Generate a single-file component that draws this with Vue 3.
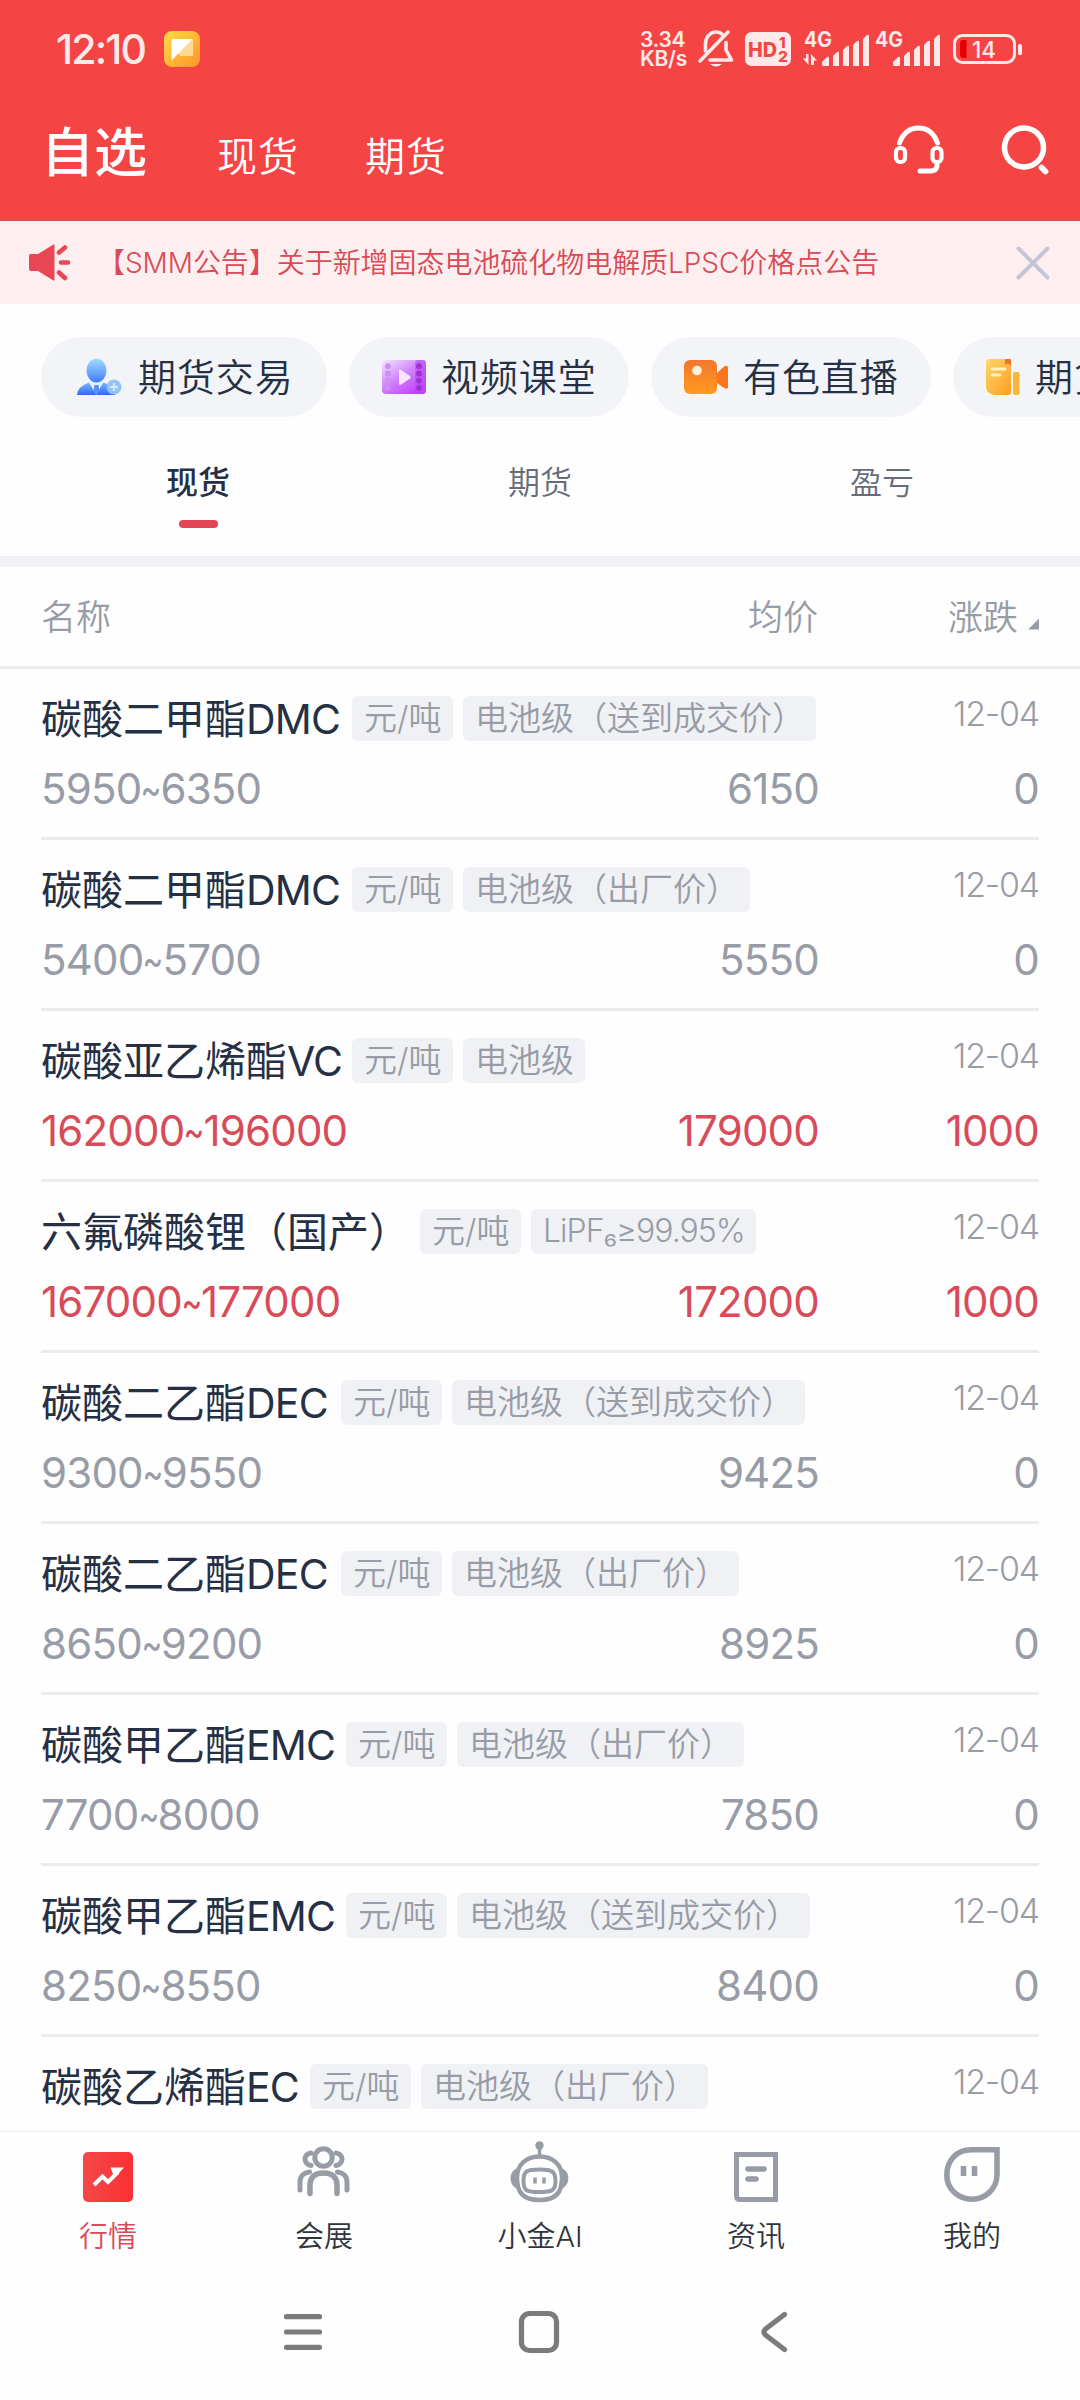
<template>
  <div class="screen">
    <header class="top">
      <div class="status">
        <span class="clock">12:10</span>
        <svg class="note-app" width="36" height="36" viewBox="0 0 36 36">
          <defs>
            <linearGradient id="note-bg" x1="0" y1="0" x2="1" y2="1">
              <stop offset="0" stop-color="#ffdc45" />
              <stop offset="1" stop-color="#ff9428" />
            </linearGradient>
          </defs>
          <rect width="36" height="36" rx="8" fill="url(#note-bg)" />
          <path d="M7 8h22v17H16z" fill="#ffd995" />
          <path d="M8.500 8H28.500L7.500 29.500V9z" fill="#fff" />
        </svg>

        <div class="status-icons">
          <div class="speed"><span>3.34</span><span>KB/s</span></div>
          <svg class="bell" width="36" height="38" viewBox="0 0 36 38" fill="none" stroke="#ffe8e8" stroke-width="3.600" stroke-linecap="round">
            <path d="M2 31 30 2" />
            <path d="M7.500 21v-7c0-7 4.500-12 10.500-12 3 0 5 1 7 2.800" />
            <path d="M28 12.500V20l5.500 10H12" stroke-linejoin="round" />
            <path d="M12 34h12q-6 5-12 0z" fill="#ffe8e8" stroke="none" />
          </svg>
          <svg class="hd" width="46" height="34" viewBox="0 0 46 34">
            <rect width="46" height="34" rx="6.500" fill="#ffe8e8" />
            <text x="3" y="24.500" font-size="20" textLength="29" lengthAdjust="spacingAndGlyphs">HD</text>
            <text x="34" y="16" font-size="15">1</text>
            <text x="33" y="30" font-size="15" textLength="10" lengthAdjust="spacingAndGlyphs">2</text>
          </svg>
          <svg v-for="sim in 2" :key="sim" class="signal" width="66" height="36" viewBox="0 0 66 36" fill="#ffe8e8">
            <text x="1" y="16" font-size="21" textLength="28" lengthAdjust="spacingAndGlyphs">4G</text>
            <path v-if="sim === 1" d="M5.500 23v11L0 27.500h3V23zM8 34V23l6 6.500h-3V34z" />
            <path d="M19 34v-3l5-5q2-1 2 1v8h-6zM30 35V25l4-4q2-1 2 1v13zM40 35V19l4-4q2-1 2 1v19zM50 35V14l4-4q2-1 2 1v24zM60 35V8l4-4q2-1 2 1v30z" />
          </svg>
          <svg class="battery" width="70" height="32" viewBox="0 0 70 32">
            <rect x="1.500" y="2.500" width="60" height="27" rx="8" fill="none" stroke="#ffe8e8" stroke-width="3" />
            <path d="M8 7h5.500v18H11q-4 0-4-4V10q0-3 3-3z" fill="#e50000" />
            <rect x="65" y="11" width="4" height="11" rx="1.500" fill="#ffe8e8" />
            <text x="19" y="24.500" font-size="23" textLength="24" lengthAdjust="spacingAndGlyphs" fill="#ffe8e8">14</text>
          </svg>
        </div>
      </div>

      <nav class="channels">
        <span class="channel on">自选</span>
        <span class="channel">现货</span>
        <span class="channel">期货</span>
        <div class="tools">
          <svg width="52" height="52" viewBox="0 0 52 52" fill="none" stroke="#fff" stroke-width="4.200" stroke-linecap="round" stroke-linejoin="round">
            <path d="M6.500 19C10.500 8 17.500 4 25.500 4S40.500 8 44.500 19" stroke-width="5" />
            <rect x="3" y="24" width="9" height="14" rx="4" />
            <rect x="39.500" y="24" width="9" height="14" rx="4" />
            <path d="M44 39v3q-1 5-6 5H27" stroke-width="5" />
          </svg>
          <svg width="50" height="52" viewBox="0 0 50 52" fill="none" stroke="#fff" stroke-linecap="round">
            <circle cx="23" cy="23.500" r="19.500" stroke-width="5.500" />
            <path d="M40.500 43.500 44.500 47.500" stroke-width="5.800" />
          </svg>
        </div>
      </nav>
    </header>

    <div class="notice">
      <svg width="44" height="40" viewBox="0 0 44 40" fill="#e94656">
        <path d="M3 11h7L25.500 1.500q1-.5 1 1v34q0 1.500-1 1L10 28H3q-2 0-2-2V13q0-2 2-2z" />
        <path d="M31 9.500 37 4.500M33 19.500h7M31 29.500l6 5.500" stroke="#e94656" stroke-width="4.600" stroke-linecap="round" />
      </svg>
      <p>【SMM公告】关于新增固态电池硫化物电解质LPSC价格点公告</p>
      <svg width="34" height="34" viewBox="0 0 34 34" fill="none" stroke="#c5c5d6" stroke-width="4" stroke-linecap="round">
        <path d="M2.500 2.500l29 29M31.500 2.500l-29 29" />
      </svg>
    </div>

    <div class="pills">
      <div v-for="pill in pills" :key="pill.icon" class="pill" :class="pill.icon">
        <svg v-if="pill.icon === 'trade'" width="46" height="38" viewBox="0 0 46 38">
          <defs>
            <linearGradient id="face" x1="0" y1="0" x2="0" y2="1">
              <stop offset="0" stop-color="#a5dcff" />
              <stop offset="1" stop-color="#3f7dff" />
            </linearGradient>
            <linearGradient id="coat" x1="0" y1="0" x2="0" y2="1">
              <stop offset="0" stop-color="#7db4ff" />
              <stop offset="1" stop-color="#2f6bf0" />
            </linearGradient>
          </defs>
          <path d="M0 37q0-8 12-12.500L19 36l7.500-11.500Q38 28 38 37z" fill="url(#coat)" />
          <path d="M13 24.500h12.500L19.500 37z" fill="#e3f1ff" />
          <path d="M17.500 27h4l1 6-3 4-3-4z" fill="#5292f8" />
          <ellipse cx="19.500" cy="12.500" rx="10" ry="12" fill="url(#face)" />
          <circle cx="37" cy="29" r="7.500" fill="#93c3f5" />
          <path d="M37 25v8M33 29h8" stroke="#d5eaff" stroke-width="1.800" />
        </svg>
        <svg v-else-if="pill.icon === 'video'" width="44" height="36" viewBox="0 0 44 36">
          <defs>
            <linearGradient id="film" x1="0" y1="0" x2=".8" y2="1">
              <stop offset="0" stop-color="#f6e8ff" />
              <stop offset=".5" stop-color="#d084fa" />
              <stop offset="1" stop-color="#c03cff" />
            </linearGradient>
          </defs>
          <rect y="1" width="44" height="34" rx="4" fill="url(#film)" />
          <rect x="33" y="1" width="11" height="34" rx="3" fill="#b64cf0" opacity=".6" />
          <g v-for="hole in 4" :key="hole">
            <circle cx="6" :cy="hole * 7.200" r="2.900" fill="#cf8df2" />
            <circle cx="37" :cy="hole * 7.200" r="2.900" fill="#9f2fd8" />
          </g>
          <path d="M17 11.500v13q0 2 2 1l9-6q1.500-1.500 0-2.500l-9-6q-2-1-2 .5z" fill="#fbe4ff" />
        </svg>
        <svg v-else-if="pill.icon === 'live'" width="44" height="36" viewBox="0 0 44 36">
          <defs>
            <linearGradient id="cam" x1="0" y1="0" x2="0" y2="1">
              <stop offset="0" stop-color="#f3762f" />
              <stop offset="1" stop-color="#ff9a1c" />
            </linearGradient>
          </defs>
          <path d="M33 14 40 7.500q4-2 4 1V28q0 3-4 1l-7-5z" fill="#f9761f" />
          <rect y="1" width="33" height="34" rx="6" fill="url(#cam)" />
          <circle cx="13" cy="11.500" r="4.800" fill="#ffeede" />
        </svg>
        <svg v-else width="34" height="38" viewBox="0 0 34 38">
          <defs>
            <linearGradient id="sheet" x1="0" y1="0" x2="1" y2="1">
              <stop offset="0" stop-color="#ffd76b" />
              <stop offset="1" stop-color="#ff9d1f" />
            </linearGradient>
          </defs>
          <rect x="27" y="14" width="6.500" height="23" rx="2" fill="#ffb638" />
          <path d="M4 1h21v33q0 3-3 3H8q-8-2-8-8V5q0-4 4-4z" fill="url(#sheet)" />
          <path d="M19 1h6v7l-3-2.500L19 7z" fill="#e67a2c" />
          <path d="M6 11h13M6 17h8" stroke="#fff1bf" stroke-width="3" stroke-linecap="round" />
        </svg>
        <span>{{ pill.label }}</span>
      </div>
    </div>

    <div class="subtabs">
      <span v-for="tab in subtabs" :key="tab" :class="{ on: tab === activeTab }" @click="activeTab = tab">{{ tab }}</span>
    </div>

    <div class="columns">
      <span class="col-name">名称</span>
      <span class="col-avg">均价</span>
      <span class="col-change">涨跌<i></i></span>
    </div>

    <main class="list">
      <article v-for="(row, index) in rows" :key="index" class="row" :class="{ up: row.change > 0 }">
        <div class="line">
          <h3>{{ row.name }}<b :style="{ width: row.codeWidth + 'px' }">{{ row.code }}</b></h3>
          <span class="tag unit">元/吨</span>
          <span class="tag" :class="{ latin: row.latin }">{{ row.spec }}</span>
          <time>12-04</time>
        </div>
        <div class="values">
          <span>{{ row.low }}<i class="tilde">~</i>{{ row.high }}</span>
          <span class="avg">{{ row.avg }}</span>
          <span class="change">{{ row.change }}</span>
        </div>
      </article>
    </main>

    <nav class="tabbar">
      <div class="tab on">
        <svg width="60" height="64" viewBox="0 0 60 64">
          <defs>
            <linearGradient id="market" x1="0" y1="0" x2="1" y2="0">
              <stop offset="0" stop-color="#f44848" />
              <stop offset="1" stop-color="#fa3034" />
            </linearGradient>
          </defs>
          <rect x="5" y="13" width="50" height="50" rx="5" fill="url(#market)" />
          <path d="M16 46 24.500 37.500 30 43 40 33" fill="none" stroke="#fff" stroke-width="4" />
          <path d="M32.500 28.500H46L36.500 39z" fill="#fff" />
        </svg>
        <span>行情</span>
      </div>
      <div class="tab">
        <svg width="60" height="64" viewBox="0 0 60 64" fill="none" stroke="#989ca6" stroke-width="5" stroke-linecap="round">
          <circle cx="29.500" cy="18.500" r="8.700" />
          <path d="M16 54.500V46c0-8 5-12 13.500-12S43 38 43 46v8.500" stroke-width="5.500" />
          <path d="M17 14c-8 1-8 11 0 12.500M42 14c8 1 8 11 0 12.500M15.500 33C10 33.500 6 37 6 43v8M43.500 33C49 33.500 53 37 53 43v8" />
        </svg>
        <span>会展</span>
      </div>
      <div class="tab">
        <svg width="60" height="64" viewBox="0 0 60 64" fill="none" stroke="#989ca6">
          <circle cx="29.500" cy="6.500" r="4.200" fill="#989ca6" stroke="none" />
          <path d="M29.500 8v9" stroke-width="3.500" />
          <path d="M7 29.500c-9 3-8 17 0 20zM52 29.500c9 3 8 17 0 20z" fill="#989ca6" stroke="none" />
          <path d="M29.500 17.500c-13 0-22.500 8-22.500 21 0 15 6 22.500 22.500 22.500S52 53.500 52 38.500c0-13-9.500-21-22.500-21z" stroke-width="4.500" />
          <path d="M29.500 30.500c-12 0-16 1-16 11.500s4 11 16 11 16-1 16-11-4-11.500-16-11.500z" stroke-width="4" />
          <path d="M25 38.500v6M34 38.500v6" stroke-width="3.500" />
        </svg>
        <span>小金AI</span>
      </div>
      <div class="tab">
        <svg width="60" height="64" viewBox="0 0 60 64" fill="none" stroke="#989ca6" stroke-width="5">
          <path d="M10.500 15.500h39v45H14q-3.500 0-3.500-3.500z" />
          <path d="M22 30h16M22 40h8" stroke-width="5.500" stroke-linecap="round" />
        </svg>
        <span>资讯</span>
      </div>
      <div class="tab">
        <svg width="60" height="64" viewBox="0 0 60 64" fill="none" stroke="#989ca6" stroke-width="5.500">
          <path d="M55 10.800H29.500C14 10.800 4.800 22 4.800 36S16 60.200 30 60.200 55 49 55 36z" />
          <path d="M21.500 27v10M32.500 27v10" stroke-width="5.500" />
        </svg>
        <span>我的</span>
      </div>
    </nav>

    <footer class="sysnav">
      <svg width="44" height="44" viewBox="0 0 44 44"><path d="M5.500 6.700h33M5.500 22h33M5.500 37.300h33" /></svg>
      <svg width="44" height="44" viewBox="0 0 44 44"><rect x="4.500" y="3.500" width="35" height="37" rx="8" /></svg>
      <svg width="44" height="44" viewBox="0 0 44 44"><path d="M31.500 4.500 12.500 19q-3 3 0 6L31.500 39.500" stroke-linejoin="round" /></svg>
    </footer>
  </div>
</template>

<script setup>
import { ref } from "vue"

const pills = [
  { icon: "trade", label: "期货交易" },
  { icon: "video", label: "视频课堂" },
  { icon: "live", label: "有色直播" },
  { icon: "report", label: "期货报告" }
]

const subtabs = ["现货", "期货", "盈亏"]
const activeTab = ref("现货")

const rows = [
  { name: "碳酸二甲酯", code: "DMC", codeWidth: 96, spec: "电池级（送到成交价）", low: 5950, high: 6350, avg: 6150, change: 0 },
  { name: "碳酸二甲酯", code: "DMC", codeWidth: 96, spec: "电池级（出厂价）", low: 5400, high: 5700, avg: 5550, change: 0 },
  { name: "碳酸亚乙烯酯", code: "VC", codeWidth: 55, spec: "电池级", low: 162000, high: 196000, avg: 179000, change: 1000 },
  { name: "六氟磷酸锂（国产）", code: "", codeWidth: 0, spec: "LiPF₆≥99.95%", latin: true, low: 167000, high: 177000, avg: 172000, change: 1000 },
  { name: "碳酸二乙酯", code: "DEC", codeWidth: 85, spec: "电池级（送到成交价）", low: 9300, high: 9550, avg: 9425, change: 0 },
  { name: "碳酸二乙酯", code: "DEC", codeWidth: 85, spec: "电池级（出厂价）", low: 8650, high: 9200, avg: 8925, change: 0 },
  { name: "碳酸甲乙酯", code: "EMC", codeWidth: 90, spec: "电池级（出厂价）", low: 7700, high: 8000, avg: 7850, change: 0 },
  { name: "碳酸甲乙酯", code: "EMC", codeWidth: 90, spec: "电池级（送到成交价）", low: 8250, high: 8550, avg: 8400, change: 0 },
  { name: "碳酸乙烯酯", code: "EC", codeWidth: 54, spec: "电池级（出厂价）", low: 5000, high: 5300, avg: 5150, change: 0 }
]
</script>

<style>
body {
  margin: 0;
  background: #fff;
}
</style>

<style scoped>
.screen {
  display: flex;
  flex-direction: column;
  width: 1080px;
  height: 2400px;
  overflow: hidden;
  color: #263044;
  background: #fefefe;
  font-family: Inter, "Noto Sans CJK SC", sans-serif;
  font-weight: 350;
  white-space: nowrap;
}

svg {
  display: block;
  flex: none;
  overflow: visible;
}

.top {
  flex: none;
  box-sizing: border-box;
  height: 221px;
  border-bottom: 1px solid #d2525a;
  background: #f44444;
}

.status {
  display: flex;
  align-items: center;
  height: 98px;
  padding: 0 57px 0 56px;
}

.clock {
  width: 108px;
  color: #ffe8e8;
  font-size: 41px;
  font-weight: 500;
  letter-spacing: -1.8px;
}

.status-icons {
  display: flex;
  align-items: center;
  margin-left: auto;
}

.speed {
  display: flex;
  flex-direction: column;
  width: 48px;
  margin-right: 10px;
  color: #ffe8e8;
  font-size: 21px;
  font-weight: 600;
  line-height: 19px;
  letter-spacing: -.3px;
}

.bell { margin-right: 11px; }

.hd {
  margin-right: 12px;
  fill: #f04747;
  font-weight: 800;
}

.signal {
  margin-right: 5px;
  font-weight: 700;
}

.battery {
  margin-left: 8px;
  font-weight: 500;
}

.channels {
  display: flex;
  align-items: center;
  height: 104px;
  padding: 0 29px 0 41px;
  color: #fff;
}

.channel {
  width: 107px;
  margin: 14px 41px 0 0;
  font-size: 40px;
  line-height: 60px;
  letter-spacing: 1px;
}

.channel.on {
  width: 135px;
  margin-top: 6px;
  font-size: 53px;
  font-weight: 500;
  letter-spacing: 0;
}

.tools {
  display: flex;
  gap: 56px;
  margin-left: auto;
}

.notice {
  display: flex;
  flex: none;
  align-items: center;
  height: 83px;
  padding: 0 30px 0 28px;
  background: #fdefef;
}

.notice p {
  flex: 1;
  margin: -3px 0 0 25px;
  color: #d94a56;
  font-size: 28px;
  letter-spacing: -.05px;
}

.pills {
  display: flex;
  flex: none;
  gap: 22px;
  padding: 33px 0 0 41px;
}

.pill {
  display: flex;
  flex: none;
  align-items: center;
  box-sizing: border-box;
  width: 280px;
  height: 80px;
  padding-left: 33px;
  border-radius: 40px;
  background: #f2f4f8;
  font-size: 38px;
  letter-spacing: .9px;
}

.pill.trade {
  width: 286px;
  padding-left: 36px;
}

.pill span {
  margin: -6px 0 0 15px;
}

.subtabs {
  display: grid;
  flex: none;
  grid-template-columns: repeat(3, 342px);
  justify-content: center;
  height: 139px;
  border-bottom: 11px solid #f0f1f4;
  color: #666d78;
  font-size: 32px;
}

.subtabs span {
  display: flex;
  flex-direction: column;
  align-items: center;
  padding-top: 43px;
  line-height: 46px;
}

.subtabs .on {
  color: #263044;
  font-weight: 500;
}

.subtabs .on::after {
  content: "";
  width: 39px;
  height: 8px;
  margin-top: 14px;
  border-radius: 4px;
  background: #e24655;
}

.columns {
  display: flex;
  flex: none;
  align-items: center;
  box-sizing: border-box;
  height: 102px;
  padding: 0 41px 5px;
  border-bottom: 3px solid #ebebeb;
  color: #989ca6;
  font-size: 35px;
}

.col-avg {
  margin-left: auto;
}

.col-change {
  display: flex;
  align-items: baseline;
  justify-content: flex-end;
  width: 221px;
}

.col-change i {
  width: 11px;
  height: 11px;
  margin-left: 10px;
  background: #989ca6;
  clip-path: polygon(100% 0, 100% 100%, 0 100%);
}

.list {
  flex: 1;
  overflow: hidden;
  padding: 0 41px;
}

.row {
  height: 168px;
  border-bottom: 3px solid #ebebeb;
}

.line {
  display: flex;
  align-items: center;
  gap: 10px;
  height: 99px;
}

.line h3 {
  display: flex;
  margin: 0;
  font-size: 41px;
  font-weight: 400;
  line-height: 60px;
}

.line b {
  font-weight: 400;
  letter-spacing: -.8px;
}

.tag {
  box-sizing: border-box;
  height: 45px;
  padding: 0 11px 0 12px;
  border-radius: 6px;
  color: #989ca6;
  background: #f0f1f4;
  font-size: 33px;
  line-height: 44px;
}

.tag.unit {
  width: 101px;
}

.tag.latin {
  width: 225px;
  font-size: 32px;
  letter-spacing: -1px;
}

.line time {
  margin: -10px 0 0 auto;
  color: #989ca6;
  font-size: 34px;
  letter-spacing: -1.2px;
}

.values {
  display: flex;
  margin-top: -5px;
  color: #989ca6;
  font-size: 42px;
  font-weight: 400;
  line-height: 52px;
  letter-spacing: -.8px;
}

.tilde {
  display: inline-block;
  margin: 0 -4px;
  font-style: normal;
  transform: scaleX(.75);
}

.avg {
  margin-left: auto;
}

.change {
  width: 220px;
  text-align: right;
}

.up .values { color: #d84b59; }

.tabbar {
  display: flex;
  flex: none;
  height: 133px;
  border-top: 1px solid #e8e8e8;
}

.tab {
  display: flex;
  flex: 1;
  flex-direction: column;
  align-items: center;
  padding-top: 7px;
  color: #30343c;
  font-size: 29px;
}

.tab span {
  margin-top: 13px;
  line-height: 42px;
}

.tab.on { color: #d84b59; }

.sysnav {
  display: flex;
  flex: none;
  gap: 192px;
  box-sizing: border-box;
  height: 135px;
  padding: 45px 0 0 281px;
}

.sysnav svg {
  fill: none;
  stroke: #7b7b7b;
  stroke-width: 5.2;
  stroke-linecap: round;
}
</style>
